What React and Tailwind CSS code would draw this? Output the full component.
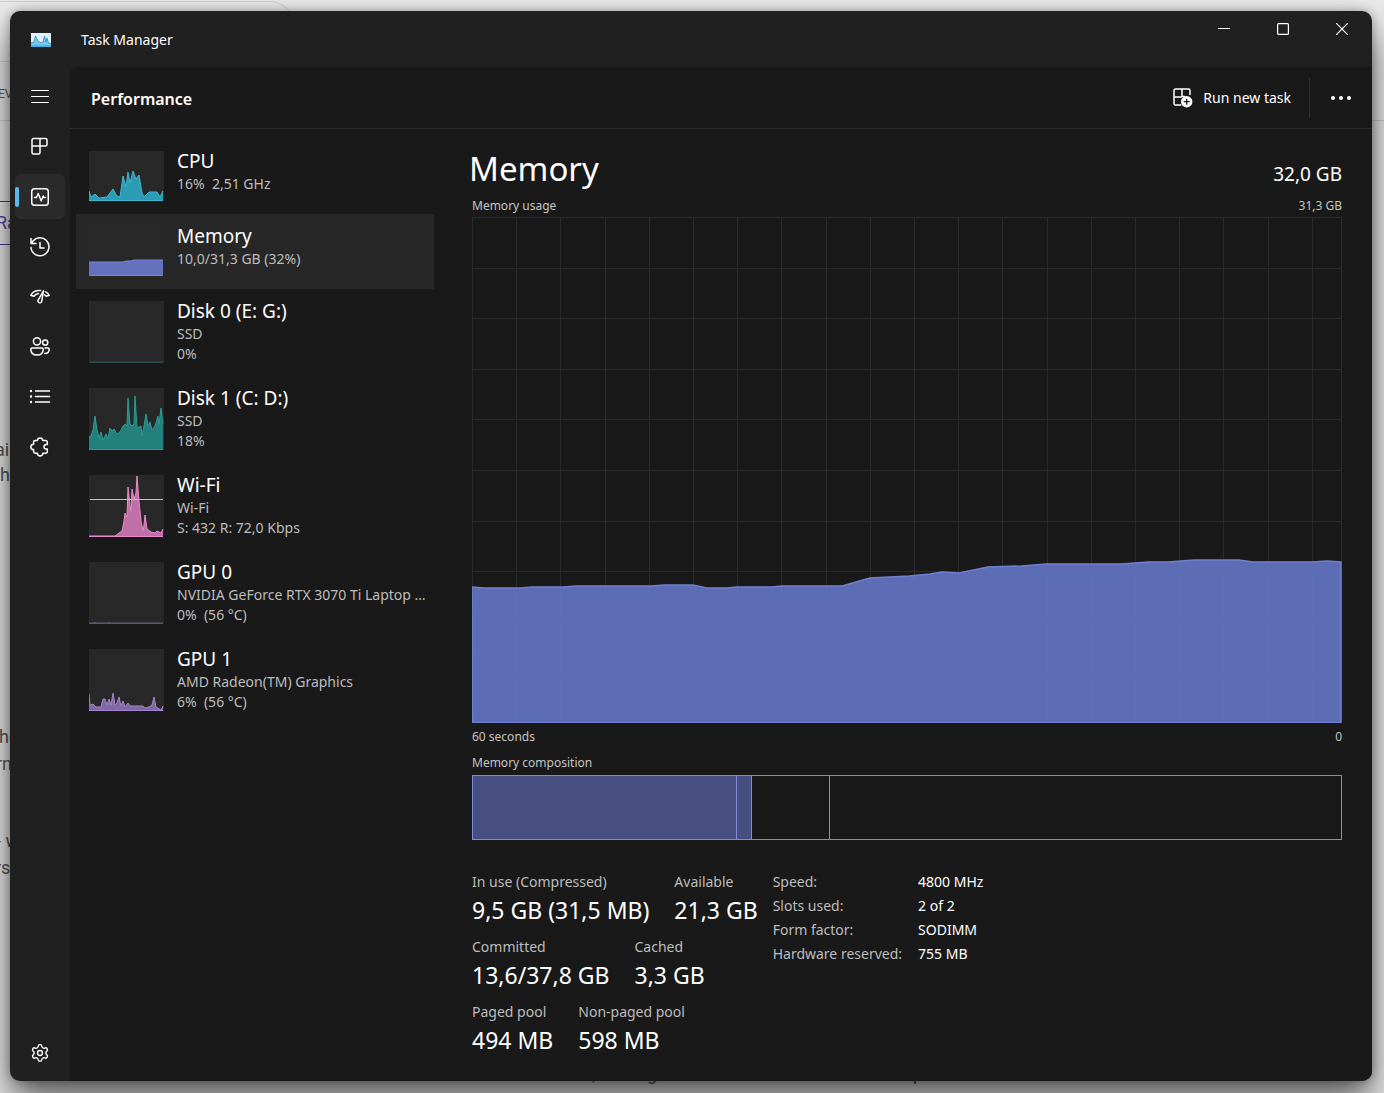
import { useState } from 'react'
import { Settings } from 'lucide-react'

// ── Data ──

const DEVICES = [
  {
    id: 'cpu',
    name: 'CPU',
    lines: ['16%  2,51 GHz'],
    height: 50,
    stroke: '#3fb6cf',
    fill: '#2c9cb5',
    points: '0,40 2,46 6,43 10,47 18,46 24,38 28,45 31,46 34,25 37,36 39,21 41,32 44,20 47,28 50,24 53,42 55,46 60,41 68,41 71,46 74,40',
  },
  {
    id: 'memory',
    name: 'Memory',
    lines: ['10,0/31,3 GB (32%)'],
    height: 50,
    stroke: '#7b83e0',
    fill: '#6471bd',
    points: '0,36 34,36 37,35 42,35 45,34 74,34',
  },
  {
    id: 'disk0',
    name: 'Disk 0 (E: G:)',
    lines: ['SSD', '0%'],
    height: 62,
    stroke: '#2b4f4b',
    fill: '#2b4f4b',
    points: '0,61 74,61',
  },
  {
    id: 'disk1',
    name: 'Disk 1 (C: D:)',
    lines: ['SSD', '18%'],
    height: 62,
    stroke: '#2a9d92',
    fill: '#24807c',
    points: '0,49 2,48 4,42 6,28 8,42 10,50 12,44 14,52 17,46 19,51 21,40 23,43 25,41 28,46 31,44 34,38 36,36 38,38 39,10 41,36 43,38 45,36 46,8 48,40 52,38 53,48 55,38 57,26 59,38 61,34 63,42 66,38 69,28 70,36 72,20 74,36',
  },
  {
    id: 'wifi',
    name: 'Wi-Fi',
    lines: ['Wi-Fi', 'S: 432 R: 72,0 Kbps'],
    height: 62,
    stroke: '#e98ac8',
    fill: '#c070a8',
    marker: 25,
    points: '0,61 26,61 30,58 33,56 35,46 36,38 38,42 39,12 41,30 42,36 43,14 45,24 47,18 48,1 50,26 52,46 54,56 55,50 56,40 58,54 62,57 66,58 68,56 72,58 74,54',
  },
  {
    id: 'gpu0',
    name: 'GPU 0',
    lines: ['NVIDIA GeForce RTX 3070 Ti Laptop GPU', '0%  (56 °C)'],
    height: 62,
    stroke: '#5d5670',
    fill: '#5d5670',
    points: '0,61 5,61 6,60 7,61 19,61 20,60 21,61 74,61',
  },
  {
    id: 'gpu1',
    name: 'GPU 1',
    lines: ['AMD Radeon(TM) Graphics', '6%  (56 °C)'],
    height: 62,
    stroke: '#a284cc',
    fill: '#7f69a3',
    points: '0,45 1,56 4,55 7,58 12,58 14,50 16,50 18,56 20,50 22,56 24,44 26,56 28,54 30,48 32,57 34,52 36,58 39,54 41,57 48,57 54,57 56,59 60,58 63,56 65,48 67,58 72,61 74,57',
  },
]

const USAGE =
  '0,370 12,371 48,371 60,370 92,370 104,369 180,369 192,368 221,368 235,371 255,371 265,370 300,370 310,369 370,369 398,361 437,359 458,357 470,355 487,356 516,350 550,349 574,347 650,347 676,345 696,345 722,343 767,343 781,345 840,345 855,344 869,345'

const STATS = [
  [
    ['In use (Compressed)', '9,5 GB (31,5 MB)'],
    ['Available', '21,3 GB'],
  ],
  [
    ['Committed', '13,6/37,8 GB'],
    ['Cached', '3,3 GB'],
  ],
  [
    ['Paged pool', '494 MB'],
    ['Non-paged pool', '598 MB'],
  ],
]

const DETAILS = [
  ['Speed:', '4800 MHz'],
  ['Slots used:', '2 of 2'],
  ['Form factor:', 'SODIMM'],
  ['Hardware reserved:', '755 MB'],
]

// ── Icons ──

function Icon({ children }) {
  return (
    <svg
      width="22"
      height="22"
      viewBox="0 0 22 22"
      fill="none"
      stroke="currentColor"
      strokeWidth="1.5"
      strokeLinecap="round"
      strokeLinejoin="round"
      aria-hidden="true"
    >
      {children}
    </svg>
  )
}

const NAV = [
  {
    id: 'processes',
    label: 'Processes',
    icon: (
      <Icon>
        <path d="M4.5 2.500h12A1.5 1.5 0 0 1 18 4v4.500a1.5 1.5 0 0 1-1.5 1.5H11v6.500A1.5 1.5 0 0 1 9.500 18h-5A1.500 1.500 0 0 1 3 16.500V4a1.500 1.500 0 0 1 1.500-1.500zM3 10h8M11 2.500V10" />
      </Icon>
    ),
  },
  {
    id: 'performance',
    label: 'Performance',
    icon: (
      <Icon>
        <rect x="2.75" y="2.75" width="16.5" height="16.5" rx="2.8" />
        <path d="M5.5 11.5h2l1.700-4 3 7.500 2-5 .8 1.500h1.500" strokeWidth="1.4" />
      </Icon>
    ),
  },
  {
    id: 'history',
    label: 'App history',
    icon: (
      <Icon>
        <path d="M2 2.500v5h5M2.700 7.200A9 9 0 1 1 2 11.500M11 6.500V12h4" />
      </Icon>
    ),
  },
  {
    id: 'startup',
    label: 'Startup apps',
    icon: (
      <Icon>
        <path d="M5 10.200 1.700 9.300C3.600 6 7 4.200 11.500 4.600M5 10.200c1-1.400 2.400-2.300 4.500-2.600" />
        <path d="M14.500 4.800 9.300 13.800a1.900 1.900 0 1 0 3.400 1.500z" />
        <path d="M16.600 5.800c1.600.8 2.800 2 3.700 3.500l-3.300.9c-.4-.6-.8-1-1.300-1.400" />
      </Icon>
    ),
  },
  {
    id: 'users',
    label: 'Users',
    icon: (
      <Icon>
        <circle cx="8" cy="5.300" r="3.600" />
        <circle cx="16.200" cy="6.500" r="2.600" />
        <path d="M3 12h10a1.200 1.200 0 0 1 1.200 1.200c0 3.600-2.500 5.800-6.200 5.800s-6.200-2.200-6.200-5.800A1.200 1.200 0 0 1 3 12zM16 12h3a1.200 1.200 0 0 1 1.200 1.200c0 2.700-1.600 4.300-4.400 4.300" />
      </Icon>
    ),
  },
  {
    id: 'details',
    label: 'Details',
    icon: (
      <Icon>
        <path d="M6.500 5h14M6.500 10.500h14M6.500 16h14" />
        <path d="M2 5h.01M2 10.500h.01M2 16h.01" strokeWidth="2.4" />
      </Icon>
    ),
  },
  {
    id: 'services',
    label: 'Services',
    icon: (
      <Icon>
        <path d="M8.400 4.600a2.700 2.700 0 0 1 5.400 0h2.900a1.600 1.600 0 0 1 1.600 1.600v2.300h-1a2.300 2.300 0 0 0 0 4.600h1v2.500a1.600 1.600 0 0 1-1.600 1.600h-2.900a2.700 2.700 0 0 1-5.400 0H6.200a1.600 1.600 0 0 1-1.600-1.600v-2a2.700 2.700 0 0 1 0-5.400v-2a1.600 1.600 0 0 1 1.600-1.600z" />
      </Icon>
    ),
  },
]

function AppLogo() {
  return (
    <svg width="20" height="14" viewBox="0 0 20 14" aria-hidden="true">
      <rect width="20" height="14" fill="#dff0fa" />
      <path d="M0 10 3 9l1.500-6L7 8l3 2 2-1 1.500-6L15 9l1-4 1.500 5 2.500.5V14H0z" fill="#7cc6ec" />
      <path d="M0 10 3 9l1.500-6L7 8l3 2 2-1 1.500-6L15 9l1-4 1.500 5 2.500.5" fill="none" stroke="#2f86c0" strokeWidth="0.8" />
      <path d="M0 13h20" stroke="#45b4e6" strokeWidth="2" />
    </svg>
  )
}

function RunTaskIcon() {
  return (
    <svg width="20" height="20" viewBox="0 0 20 20" fill="none" stroke="currentColor" strokeWidth="1.5" aria-hidden="true">
      <path d="M8.500 17h-6A1.500 1.500 0 0 1 1 15.500v-13A1.500 1.500 0 0 1 2.500 1h13A1.500 1.500 0 0 1 17 2.500V7M1 9h8M9 1v8M9 8.500h3" strokeLinejoin="round" />
      <circle cx="13.700" cy="13.700" r="5.700" fill="#fff" stroke="none" />
      <path d="M13.700 10.700v6M10.700 13.700h6" stroke="#191919" strokeWidth="1.3" />
    </svg>
  )
}

// ── Charts ──

function Thumbnail({ device }) {
  const { height, points, stroke, fill, marker } = device
  return (
    <svg width="75" height={height} viewBox={`0 0 75 ${height}`} className="shrink-0 bg-[#282828]" aria-hidden="true">
      <polygon points={`0,${height} ${points} 74,${height}`} fill={fill} />
      <polyline points={points} fill="none" stroke={stroke} strokeWidth="1" />
      <path d={`M0 ${height - 0.5}H74`} stroke={stroke} />
      {marker && <path d={`M1 ${marker - 0.5}H74`} stroke="#f0a8d8" />}
    </svg>
  )
}

function UsageChart() {
  const columns = Array.from({ length: 19 }, (_, i) => (i + 1) * 44.2)
  const rows = Array.from({ length: 9 }, (_, i) => (i + 1) * 50.6)
  return (
    <svg
      viewBox="0 0 870 506"
      preserveAspectRatio="none"
      className="min-h-60 w-full grow basis-0"
      role="img"
      aria-label="Memory usage over 60 seconds"
    >
      <g stroke="#2b2b2b">
        {columns.map((x) => (
          <path key={x} d={`M${Math.round(x) + 0.5} 0V506`} />
        ))}
        {rows.map((y) => (
          <path key={y} d={`M0 ${Math.round(y) + 0.5}H870`} />
        ))}
        <rect x="0.5" y="0.5" width="869" height="505" fill="none" />
      </g>
      <polygon points={`0,506 ${USAGE} 869,506`} fill="#6577c6" fillOpacity="0.9" />
      <polygon points={`0.5,505.5 ${USAGE} 869,505.5`} fill="none" stroke="#717fd0" strokeWidth="1.5" />
    </svg>
  )
}

function Composition() {
  return (
    <div className="flex h-[65px] border border-[#7c8cdc]">
      <div className="w-[30.4%] border-r border-[#7c8cdc] bg-[#474e80]" />
      <div className="w-[1.7%] border-r border-[#7c8cdc] bg-[#474e80]" />
      <div className="w-[9%] border-r border-[#7c8cdc]" />
    </div>
  )
}

// ── Page left open behind the window ──

function Backdrop() {
  return (
    <div className="absolute inset-0 overflow-hidden bg-[#e9e9e9] font-['Roboto',sans-serif] text-[18px] text-[#555]" aria-hidden="true">
      <div className="absolute top-[1px] -left-4 h-[61px] w-[310px] rounded-tr-[24px] border border-[#d0d0d0]" />
      <div className="absolute top-[120px] h-px w-full bg-[#cfcfcf]" />
      <div className="absolute top-[201px] h-[44px] w-40 border-y border-[#4b3f8c]" />
      <span className="absolute top-[85px] -left-[2px] text-[12px]">EV</span>
      <span className="absolute top-[209px] -left-[4px] text-[#5b3fa8]">Ra</span>
      <span className="absolute top-[436px] -left-[5px]">ai</span>
      <span className="absolute top-[461px] left-0">h</span>
      <span className="absolute top-[723px] -left-[1px]">he</span>
      <span className="absolute top-[750px] -left-[4px]">rn</span>
      <span className="absolute top-[827px] -left-[4px]">- w</span>
      <span className="absolute top-[854px] -left-[5px]">rs</span>
      <span className="absolute top-[1060px] left-[592px]">,</span>
      <span className="absolute top-[1060px] left-[647px]">g</span>
      <span className="absolute top-[1060px] left-[913px]">p</span>
    </div>
  )
}

// ── Window parts ──

function TitleBar() {
  return (
    <header className="flex h-14 items-center">
      <div className="flex flex-1 items-center gap-[30px] pt-px pl-[21px]">
        <AppLogo />
        <h1 className="text-[14px]">Task Manager</h1>
      </div>
      <div className="flex self-start pr-px">
        <button type="button" aria-label="Minimize" className="flex h-9 w-[59px] items-center justify-center hover:bg-white/10">
          <svg width="12" height="12" stroke="currentColor"><path d="M0 5.500h12" /></svg>
        </button>
        <button type="button" aria-label="Maximize" className="flex h-9 w-[59px] items-center justify-center hover:bg-white/10">
          <svg width="12" height="12" fill="none" stroke="currentColor" strokeWidth="1.2"><rect x="0.6" y="0.6" width="10.800" height="10.800" rx="1" /></svg>
        </button>
        <button type="button" aria-label="Close" className="flex h-9 w-[59px] items-center justify-center rounded-tr-lg hover:bg-red-700">
          <svg width="12" height="12" stroke="currentColor" strokeWidth="1.2"><path d="M0 0l12 12M12 0 0 12" /></svg>
        </button>
      </div>
    </header>
  )
}

function NavRail({ active, onSelect }) {
  return (
    <nav className="flex w-[60px] shrink-0 flex-col items-center gap-[5px] pt-[7px] pb-[6px]">
      <button type="button" aria-label="Open navigation" className="flex h-[45px] w-[50px] items-center justify-center rounded-md hover:bg-white/5">
        <svg width="20" height="14" stroke="currentColor" strokeWidth="1.2" aria-hidden="true">
          <path d="M1 .5h18M1 6.500h18M1 12.500h18" />
        </svg>
      </button>
      {NAV.map((item) => (
        <button
          key={item.id}
          type="button"
          aria-label={item.label}
          onClick={() => onSelect(item.id)}
          className={`relative flex h-[45px] w-[50px] items-center justify-center rounded-md ${active === item.id ? 'bg-[#2b2b2b]' : 'hover:bg-white/5'}`}
        >
          {active === item.id && <span className="absolute left-0 h-5 w-1 rounded-full bg-[#5bb8f0]" />}
          {item.icon}
        </button>
      ))}
      <button type="button" aria-label="Settings" className="mt-auto flex h-[45px] w-[50px] items-center justify-center rounded-md hover:bg-white/5">
        <Settings size={20} strokeWidth={1.6} />
      </button>
    </nav>
  )
}

function DeviceList({ selected, onSelect }) {
  return (
    <ul className="w-[358px] shrink-0">
      {DEVICES.map((device) => (
        <li key={device.id}>
          <button
            type="button"
            onClick={() => onSelect(device.id)}
            className={`flex w-full items-start gap-[13px] px-[13px] text-left ${device.lines.length > 1 ? 'h-[87px]' : 'h-[75px]'} ${selected === device.id ? 'bg-[#272727]' : ''}`}
          >
            <span className="pt-3"><Thumbnail device={device} /></span>
            <span className="-mr-[10px] min-w-0 flex-1 pt-[9px]">
              <span className="block text-[19px] leading-[26px]">{device.name}</span>
              {device.lines.map((line) => (
                <span key={line} className="block truncate text-[14px] leading-5 whitespace-pre text-[#bdbdbd]">{line}</span>
              ))}
            </span>
          </button>
        </li>
      ))}
    </ul>
  )
}

function MemoryPanel() {
  return (
    <section className="flex min-w-0 flex-1 flex-col">
      <div className="mb-1 flex items-baseline justify-between pt-2">
        <h3 className="-ml-[3px] text-[33px] leading-[44px]">Memory</h3>
        <span className="text-[19px] leading-[26px]">32,0 GB</span>
      </div>
      <div className="flex justify-between text-[12px] leading-[22px] text-[#c4c4c4]">
        <span>Memory usage</span>
        <span>31,3 GB</span>
      </div>
      <UsageChart />
      <div className="flex justify-between text-[12px] leading-[27px] text-[#c4c4c4]">
        <span>60 seconds</span>
        <span>0</span>
      </div>
      <h4 className="text-[12px] leading-[25px] text-[#c4c4c4]">Memory composition</h4>
      <Composition />

      <div className="mt-[30px] flex gap-[15px]">
        <div className="flex flex-col gap-[9px]">
          {STATS.map((row) => (
            <dl key={row[0][0]} className="flex gap-[25px]">
              {row.map(([label, value]) => (
                <div key={label}>
                  <dt className="text-[14px] leading-6 text-[#bdbdbd]">{label}</dt>
                  <dd className="text-[23px] leading-8">{value}</dd>
                </div>
              ))}
            </dl>
          ))}
        </div>
        <dl className="grid grid-cols-[auto_auto] content-start gap-x-4 text-[14px] leading-6">
          {DETAILS.map(([label, value]) => (
            <div key={label} className="contents">
              <dt className="text-[#bdbdbd]">{label}</dt>
              <dd>{value}</dd>
            </div>
          ))}
        </dl>
      </div>
    </section>
  )
}

export default function App() {
  const [page, setPage] = useState('performance')
  const [device, setDevice] = useState('memory')

  return (
    <div className="relative flex min-h-screen pt-[11px] pr-3 pb-3 pl-[10px] font-['Noto_Sans','Open_Sans',sans-serif] text-white">
      <Backdrop />
      <div className="relative flex min-w-0 flex-1 flex-col rounded-[10px] bg-[#202020] shadow-[0_20px_36px_rgba(0,0,0,0.6),0_0_10px_rgba(0,0,0,0.3)]">
        <TitleBar />
        <div className="flex flex-1">
          <NavRail active={page} onSelect={setPage} />
          <main className="flex min-w-0 flex-1 flex-col rounded-tl-lg rounded-br-[10px] bg-[#191919]">
            <div className="flex h-[62px] items-center border-b border-[#2c2c2c] pl-[21px]">
              <h2 className="flex-1 pt-[2px] text-[16px] font-semibold">Performance</h2>
              <button type="button" className="flex h-10 items-center gap-[10px] rounded-md px-[18px] text-[14px] hover:bg-white/5">
                <RunTaskIcon />
                Run new task
              </button>
              <span className="h-10 w-px bg-[#2c2c2c]" />
              <button type="button" aria-label="More options" className="flex h-10 w-[62px] items-center justify-center hover:bg-white/5">
                <svg width="22" height="4" fill="currentColor" aria-hidden="true">
                  <circle cx="3" cy="2" r="2" />
                  <circle cx="11" cy="2" r="2" />
                  <circle cx="19" cy="2" r="2" />
                </svg>
              </button>
            </div>
            <div className="flex flex-1 gap-[38px] pt-[10px] pr-[30px] pb-[25px] pl-[6px]">
              <DeviceList selected={device} onSelect={setDevice} />
              <MemoryPanel />
            </div>
          </main>
        </div>
      </div>
    </div>
  )
}
